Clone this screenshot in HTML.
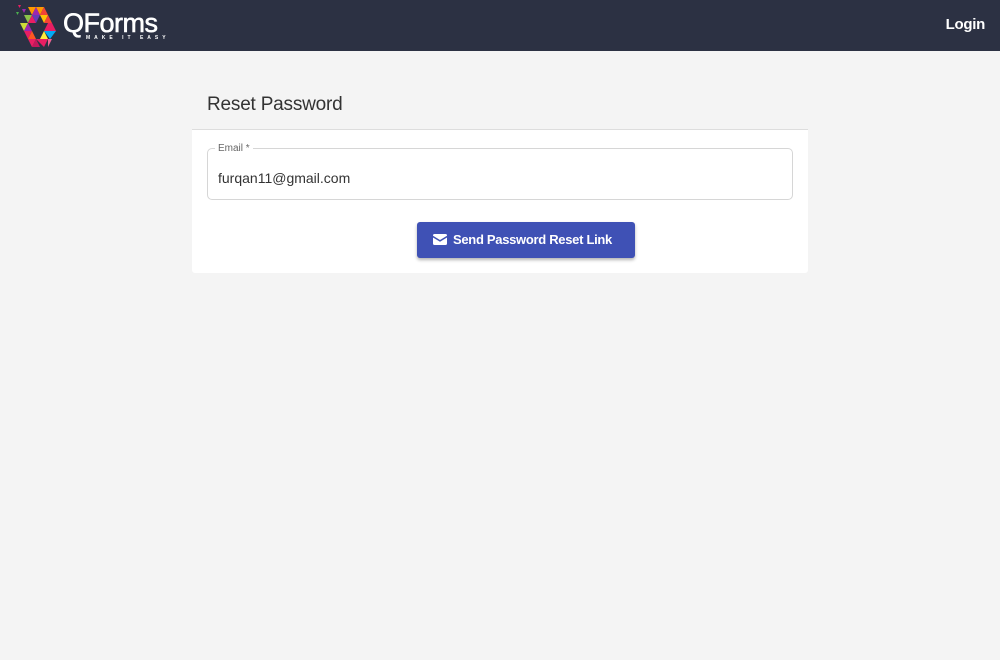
<!DOCTYPE html>
<html><head><meta charset="utf-8"><style>
*{margin:0;padding:0;box-sizing:border-box}
body{width:1000px;height:660px;background:#f4f4f4;font-family:"Liberation Sans",Roboto,sans-serif;overflow:hidden;position:relative}
.hdr{position:absolute;left:0;top:0;width:1000px;height:51px;background:#2c3143}
.logo{position:absolute;left:14px;top:3px}
.qf{position:absolute;left:63px;top:8px;color:#fff;font-size:27px;letter-spacing:-0.5px;-webkit-text-stroke:0.6px #fff}
.tag{position:absolute;left:86px;top:35px;color:#fff;font-size:5px;letter-spacing:4px;font-weight:bold}
.login{position:absolute;right:15px;top:16px;color:#fff;font-weight:bold;font-size:15px;letter-spacing:-0.3px}
.title{position:absolute;left:207px;top:94px;font-size:19px;color:#333;letter-spacing:-0.2px}
.line{position:absolute;left:192px;top:129px;width:616px;height:1px;background:#ddd}
.card{position:absolute;left:192px;top:130px;width:616px;height:143px;background:#fff;border-radius:0 0 3px 3px}
.field{position:absolute;left:15px;top:18px;width:586px;height:52px;border:1px solid #d6d6d6;border-radius:5px}
.lab{position:absolute;left:7px;top:-6px;background:#fff;padding:0 3px;font-size:10px;color:#666}
.val{position:absolute;left:10px;top:21px;font-size:14px;color:#333}
.btn{position:absolute;left:225px;top:92px;width:218px;height:36px;background:#3f51b5;border-radius:3px;box-shadow:0 2px 3px rgba(0,0,0,.3);color:#fff;font-weight:bold;font-size:13px;letter-spacing:-0.3px;line-height:36px;padding-left:36px;white-space:nowrap}
.btn svg{position:absolute;left:16px;top:12px}
</style></head><body>
<div class="hdr">
<svg class="logo" width="46" height="46" viewBox="0 0 46 46">
<polygon points="4,2 7,2 5.5,5" fill="#e91e63"/><polygon points="8,6 12,6 10,10" fill="#9c27b0"/><polygon points="2,9 5,9 3.5,12" fill="#4caf50"/>
<polygon points="14,4 22,4 18,12" fill="#ff9800"/><polygon points="18,12 22,4 26,12" fill="#9c27b0"/><polygon points="22,4 30,4 26,12" fill="#ff9800"/>
<polygon points="10,12 18,12 14,20" fill="#8bc34a"/><polygon points="14,20 18,12 22,20" fill="#e91e63"/><polygon points="18,12 26,12 22,20" fill="#673ab7"/><polygon points="26,12 30,4 34,12" fill="#f44336"/>
<polygon points="6,20 14,20 10,28" fill="#cddc39"/><polygon points="10,28 14,20 18,28" fill="#9c27b0"/><polygon points="26,12 34,12 30,20" fill="#ffc107"/><polygon points="30,20 34,12 38,20" fill="#f44336"/><polygon points="34,20 38,20 42,28 30,28" fill="#e91e63"/>
<polygon points="10,28 18,28 14,36" fill="#e91e63"/><polygon points="14,36 18,28 22,36" fill="#ff5722"/><polygon points="30,28 42,28 36,36" fill="#03a9f4"/><polygon points="26,36 30,28 34,36" fill="#ffeb3b"/>
<polygon points="14,36 22,36 18,44" fill="#e91e63"/><polygon points="18,44 22,36 26,44" fill="#c2185b"/><polygon points="22,36 34,36 30,44" fill="#e91e63"/><polygon points="34,36 38,36 34,44" fill="#f06292"/>
</svg>
<div class="qf">QForms</div>
<div class="tag">MAKE IT EASY</div>
<div class="login">Login</div>
</div>
<div class="title">Reset Password</div>
<div class="line"></div>
<div class="card">
<div class="field"><span class="lab">Email *</span><div class="val">furqan11@gmail.com</div></div>
<div class="btn"><svg width="14" height="11" viewBox="0 0 14 11"><path d="M0 1.5Q0 0 1.5 0h11Q14 0 14 1.5v.3L7 6 0 1.8z M0 3.5L7 7.8 14 3.5V9.5Q14 11 12.5 11h-11Q0 11 0 9.5z" fill="#fff"/></svg>Send Password Reset Link</div>
</div>
</body></html>
